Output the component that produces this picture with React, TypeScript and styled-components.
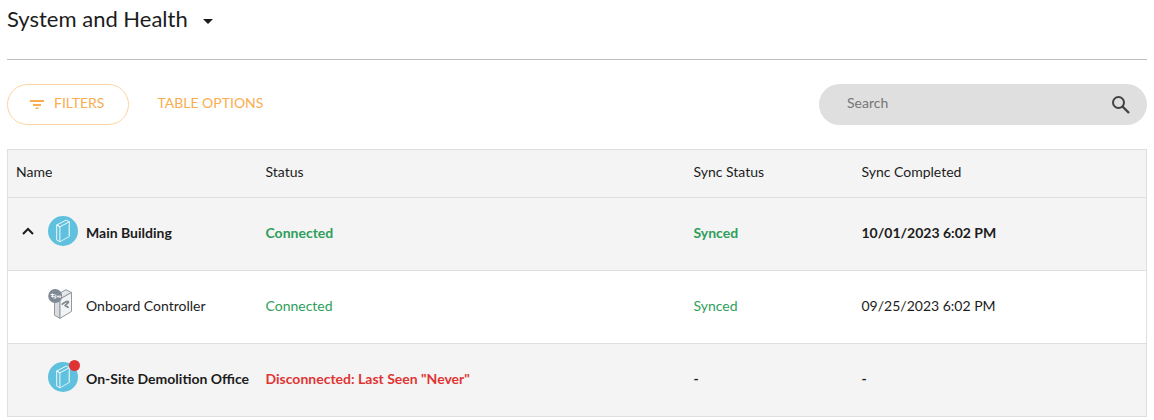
import React from "react";
import styled, { createGlobalStyle } from "styled-components";

const GlobalStyle = createGlobalStyle`
  *, *::before, *::after { box-sizing: border-box; }
  body {
    margin: 0;
    background: #fff;
    color: #1c1c1c;
    font-family: Lato, "Liberation Sans", sans-serif;
    font-size: 14px;
    line-height: 20px;
  }
  button, input { font: inherit; }
`;

const Page = styled.main`
  padding: 0 7px;
`;

const Header = styled.header`
  height: 60px;
  padding-top: 5px;
  border-bottom: 1px solid #bdbdbd;
`;

const ViewButton = styled.button`
  display: flex;
  align-items: center;
  gap: 15px;
  padding: 0;
  border: 0;
  background: none;
  color: inherit;
`;

const Title = styled.h1`
  margin: 0;
  font-size: 22px;
  font-weight: 400;
  line-height: 28px;
`;

const Caret = styled.svg`
  width: 10px;
  height: 5px;
  margin-top: 4px;
  fill: #1c1c1c;
`;

const Toolbar = styled.div`
  display: flex;
  align-items: center;
  justify-content: space-between;
  padding: 24px 0;
`;

const Actions = styled.div`
  display: flex;
  gap: 28px;
`;

const ActionButton = styled.button<{ $outlined?: boolean }>`
  display: flex;
  align-items: center;
  gap: 10px;
  height: 41px;
  padding: ${(p) => (p.$outlined ? "0 24px 4px 22px" : "0 0 4px")};
  border: ${(p) => (p.$outlined ? "1px solid #fbd39d" : "0")};
  border-radius: 21px;
  background: none;
  color: #f9ad4f;
`;

const FilterIcon = styled.svg`
  width: 14px;
  height: 9px;
  margin-top: 4px;
  stroke: #f9ad4f;
  stroke-width: 2;
`;

const SearchBox = styled.form`
  display: flex;
  align-items: center;
  width: 328px;
  height: 41px;
  padding: 0 17px 0 28px;
  border-radius: 21px;
  background: #dfdfdf;
`;

const SearchInput = styled.input`
  flex: 1;
  min-width: 0;
  padding: 0 0 4px;
  border: 0;
  outline: 0;
  background: none;
  color: #1c1c1c;
  &::placeholder { color: #757575; opacity: 1; }
`;

const SearchButton = styled.button`
  display: flex;
  padding: 0;
  border: 0;
  background: none;
`;

const Table = styled.table`
  width: 100%;
  table-layout: fixed;
  border-collapse: collapse;
  border: 1px solid #dfdfdf;
`;

const Column = styled.col<{ $width?: number }>`
  width: ${(p) => (p.$width ? `${p.$width}px` : "auto")};
`;

const HeadCell = styled.th`
  height: 48px;
  padding: 0 8px 4px;
  background: #f4f4f4;
  font-weight: 400;
  text-align: left;
`;

const Row = styled.tr<{ $group?: boolean }>`
  height: 73px;
  border-top: 1px solid #dfdfdf;
  background: ${(p) => (p.$group ? "#f4f4f4" : "#fff")};
  font-weight: ${(p) => (p.$group ? 700 : 400)};
`;

const tones = { good: "#2e9e5b", bad: "#e03434", plain: "#1c1c1c" };
type Tone = keyof typeof tones;

const Cell = styled.td<{ $tone?: Tone }>`
  padding: 0 8px 2px;
  color: ${(p) => tones[p.$tone ?? "plain"]};
  white-space: nowrap;
`;

const NameGroup = styled.div`
  display: flex;
  align-items: center;
  gap: 8px;
`;

const Toggle = styled.button`
  display: flex;
  width: 24px;
  padding: 0 6px 4px;
  border: 0;
  background: none;
`;

const ToggleSpace = styled.span`
  width: 24px;
`;

const IconHolder = styled.span`
  position: relative;
  display: flex;
  width: 30px;
  height: 30px;
  margin-bottom: 4px;
`;

const AlertDot = styled.span`
  position: absolute;
  top: -2px;
  right: -2px;
  width: 11px;
  height: 11px;
  border-radius: 50%;
  background: #e03434;
`;

const SiteIcon = () => (
  <svg width="30" height="30" viewBox="0 0 30 30" aria-hidden="true">
    <circle cx="15" cy="15" r="15" fill="#5fc1dd" />
    <g fill="none" stroke="#fff" strokeLinejoin="round">
      <path d="M8.700 9v15l3.200 1.800V10.800z" strokeWidth="0.900" />
      <path d="M8.700 9L18.200 4.100l3.200 1.700-9.500 5z" strokeWidth="0.900" />
      <path d="M21.400 5.800v14.600l-9.500 5.400" strokeWidth="0.900" opacity="0.850" />
      <path d="M20.600 9v11" strokeWidth="0.700" opacity="0.400" />
    </g>
  </svg>
);

const ControllerIcon = () => (
  <svg width="30" height="30" viewBox="0 0 30 30" aria-hidden="true">
    <g stroke="#9299a1" strokeWidth="1" strokeLinejoin="round">
      <path d="M6.500 7l5.500 3v19.300l-5.500-3z" fill="#d9dcdf" />
      <path d="M6.500 7L18 .7l5.500 2.800L12 10z" fill="#e4e6e8" />
      <path d="M12 10l11.500-6.500v19L12 29.300z" fill="#f1f2f3" />
    </g>
    <path
      d="M13.800 15.700C16 13.500 19.500 11.600 20.300 12.700c.9 1.400-3.400 2.600-3.200 3.900.2 1 2.200-.3 3.300 2.300"
      fill="none" stroke="#7d868f" strokeWidth="1.700"
    />
    <circle cx="7.200" cy="7" r="7" fill="#808a95" />
    <g fill="none" stroke="#fff" strokeWidth="0.900">
      <path d="M2.500 5.500h4M3 7.300h4M4.500 4.500v4M5.500 9h2.200M7.800 5.500v3.800M9 8.500l1-1.800 1 2M12 6.300v2.600M11.500 7.800h1.800" />
    </g>
  </svg>
);

interface Entry {
  name: string;
  group?: boolean;
  expanded?: boolean;
  alert?: boolean;
  status: string;
  tone: Tone;
  sync: string;
  syncTone: Tone;
  completed: string;
}

const entries: Entry[] = [
  { name: "Main Building", group: true, expanded: true, status: "Connected", tone: "good", sync: "Synced", syncTone: "good", completed: "10/01/2023 6:02 PM" },
  { name: "Onboard Controller", status: "Connected", tone: "good", sync: "Synced", syncTone: "good", completed: "09/25/2023 6:02 PM" },
  { name: "On-Site Demolition Office", group: true, alert: true, status: 'Disconnected: Last Seen "Never"', tone: "bad", sync: "-", syncTone: "plain", completed: "-" },
];

export default function App() {
  return (
    <>
      <GlobalStyle />
      <Page>
        <Header>
          <ViewButton type="button">
            <Title>System and Health</Title>
            <Caret viewBox="0 0 10 5" aria-hidden="true"><path d="M0 0h10L5 5z" /></Caret>
          </ViewButton>
        </Header>
        <Toolbar>
          <Actions>
            <ActionButton type="button" $outlined>
              <FilterIcon viewBox="0 0 14 9" aria-hidden="true">
                <path d="M0 1h14M3 5h8M5.500 8.500h3" />
              </FilterIcon>
              FILTERS
            </ActionButton>
            <ActionButton type="button">TABLE OPTIONS</ActionButton>
          </Actions>
          <SearchBox role="search" onSubmit={(e) => e.preventDefault()}>
            <SearchInput type="text" aria-label="Search" placeholder="Search" />
            <SearchButton type="submit" aria-label="Submit search">
              <svg width="18" height="18" viewBox="0 0 18 18" aria-hidden="true">
                <g fill="none" stroke="#424242" strokeWidth="2">
                  <circle cx="6.500" cy="6.500" r="5.500" />
                  <path d="M10.500 10.500l6.500 6.500" strokeWidth="2.400" />
                </g>
              </svg>
            </SearchButton>
          </SearchBox>
        </Toolbar>
        <Table>
          <colgroup>
            <Column $width={250} />
            <Column />
            <Column $width={168} />
            <Column $width={293} />
          </colgroup>
          <thead>
            <tr>
              <HeadCell scope="col">Name</HeadCell>
              <HeadCell scope="col">Status</HeadCell>
              <HeadCell scope="col">Sync Status</HeadCell>
              <HeadCell scope="col">Sync Completed</HeadCell>
            </tr>
          </thead>
          <tbody>
            {entries.map((e) => (
              <Row key={e.name} $group={e.group}>
                <Cell>
                  <NameGroup>
                    {e.expanded ? (
                      <Toggle type="button" aria-label="Collapse" aria-expanded>
                        <svg width="12" height="8" viewBox="0 0 12 8" aria-hidden="true">
                          <path d="M1 7l5-5 5 5" fill="none" stroke="#1c1c1c" strokeWidth="2" />
                        </svg>
                      </Toggle>
                    ) : (
                      <ToggleSpace />
                    )}
                    <IconHolder>
                      {e.group ? <SiteIcon /> : <ControllerIcon />}
                      {e.alert && <AlertDot />}
                    </IconHolder>
                    {e.name}
                  </NameGroup>
                </Cell>
                <Cell $tone={e.tone}>{e.status}</Cell>
                <Cell $tone={e.syncTone}>{e.sync}</Cell>
                <Cell>{e.completed}</Cell>
              </Row>
            ))}
          </tbody>
        </Table>
      </Page>
    </>
  );
}
